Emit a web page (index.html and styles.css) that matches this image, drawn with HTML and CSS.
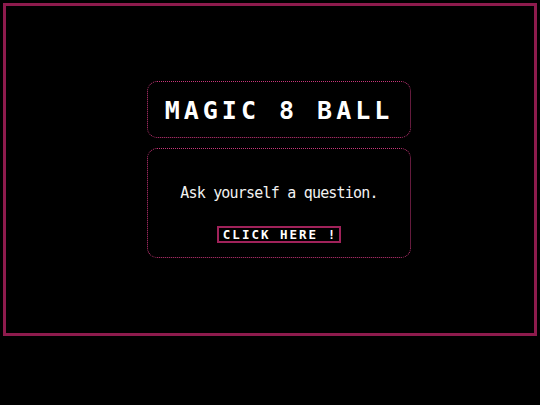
FILE: index.html
```html
<!DOCTYPE html>
<html lang="en">
<head>
<meta charset="utf-8">
<title>Magic 8 Ball</title>
<link rel="stylesheet" href="styles.css">
</head>
<body>
<div class="frame">
  <div class="stack">
    <div class="card title-card">
      <h1 class="title">MAGIC 8 BALL</h1>
    </div>
    <div class="card body-card">
      <p class="prompt">Ask yourself a question.</p>
      <button class="btn" type="button">CLICK HERE !</button>
    </div>
  </div>
</div>
</body>
</html>
```

FILE: styles.css
```css
html, body {
  margin: 0;
  padding: 0;
  background: #000;
}
body {
  width: 540px;
  height: 405px;
  font-family: "DejaVu Sans Mono", "Liberation Mono", monospace;
  color: #fff;
}
.frame {
  box-sizing: border-box;
  margin: 3px;
  width: 534px;
  height: 333px;
  border: 3px solid #8e1b4d;
  display: flex;
  align-items: center;
  justify-content: flex-start;
  padding-left: 141px;
}
.stack {
  width: 264px;
  display: flex;
  flex-direction: column;
  gap: 10px;
}
.card {
  box-sizing: border-box;
  border: 1px dotted #c8367a;
  border-radius: 10px;
}
.title-card {
  height: 57px;
  display: flex;
  align-items: center;
  justify-content: center;
}
.title {
  margin: 0;
  font-size: 25px;
  font-weight: bold;
  letter-spacing: 4px;
  line-height: 1;
  padding-top: 1px;
}
.body-card {
  height: 110px;
  padding: 34px 0 14px;
  display: flex;
  flex-direction: column;
  align-items: center;
}
.prompt {
  margin: 0;
  height: 20px;
  line-height: 20px;
  font-size: 15px;
  letter-spacing: -0.8px;
  color: #f2f2f2;
}
.btn {
  margin-top: 23px;
  box-sizing: border-box;
  width: 124px;
  height: 17px;
  padding: 0;
  background: #000;
  border: 2px solid #a0225a;
  color: #fff;
  font-family: "DejaVu Sans Mono", "Liberation Mono", monospace;
  font-weight: bold;
  font-size: 12.5px;
  letter-spacing: 2px;
  line-height: 13px;
  text-indent: 2px;
}
```
